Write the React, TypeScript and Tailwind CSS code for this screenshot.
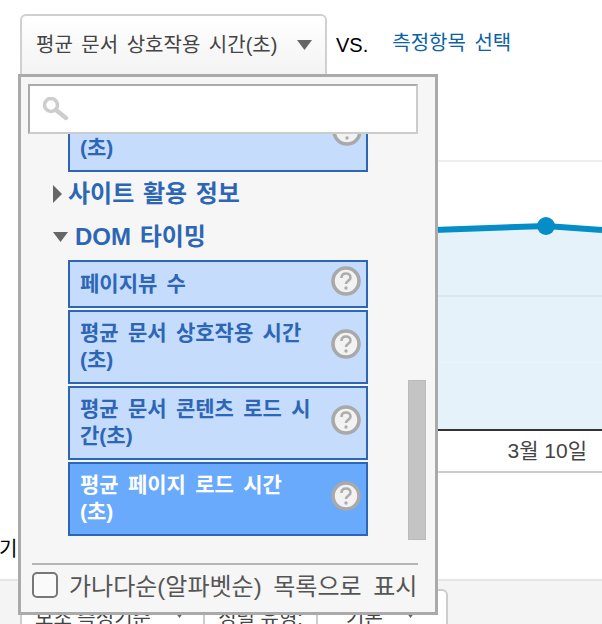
const font = "font-['Liberation_Sans','Noto_Sans_CJK_KR',sans-serif]";

const metrics = [
  { label: "페이지뷰 수", h: "h-[48px]" },
  { label: "평균 문서 상호작용 시간\n(초)", h: "h-[74px]" },
  { label: "평균 문서 콘텐츠 로드 시\n간(초)", h: "h-[74px]" },
  { label: "평균 페이지 로드 시간\n(초)", h: "h-[74px]", selected: true },
];

function HelpIcon() {
  return (
    <svg width="30" height="30" viewBox="0 0 30 30" className="shrink-0">
      <circle cx="15" cy="15" r="13" fill="#f2f2f2" stroke="#a9a9a9" strokeWidth="3.6" />
      <path
        d="M10.5 12c0-3 2-4.5 4.5-4.5s4.5 1.6 4.5 4c0 3.3-4.5 3.3-4.5 6.5"
        fill="none"
        stroke="#adadad"
        strokeWidth="2.6"
      />
      <circle cx="15" cy="22" r="1.7" fill="#adadad" />
    </svg>
  );
}

function Caret() {
  return (
    <svg width="15" height="10" viewBox="0 0 15 10" className="shrink-0">
      <path d="M0 0H15L7.5 10Z" fill="#666666" />
    </svg>
  );
}

function MetricItem({ label, h, selected }: { label: string; h: string; selected?: boolean }) {
  return (
    <div
      className={`flex w-[300px] items-center justify-between border-2 border-[#2d66b5] pl-[10px] pr-[5px] ${h} ${
        selected ? "bg-[#69aafd] text-white" : "bg-[#c5dcfd] text-[#2d66b5]"
      }`}
    >
      <span className="pb-[2px] text-[21px] leading-[27px] font-bold whitespace-pre-line [word-spacing:3.5px]">
        {label}
      </span>
      <div className="mb-[6px]">
        <HelpIcon />
      </div>
    </div>
  );
}

function MetricPanel() {
  return (
    <div className="absolute top-[74px] left-[18px] flex h-[541px] w-[420px] flex-col border-[3px] border-[#aaaaaa] bg-[#f6f6f6] px-[7px] pt-[7px]">
      <div className="flex h-[50px] w-[390px] shrink-0 items-center border-2 border-[#cccccc] border-t-[#aaaaaa] border-l-[#aaaaaa] bg-white pl-[12px]">
        <svg width="27" height="24" viewBox="0 0 27 24" className="blur-[0.5px]">
          <circle cx="9" cy="8" r="6.5" fill="none" stroke="#cdcdcd" strokeWidth="3.6" />
          <path d="M14 13 24 21" stroke="#cdcdcd" strokeWidth="4.4" strokeLinecap="round" />
        </svg>
      </div>
      <div className="relative h-[429px] shrink-0 overflow-hidden pl-[40px]">
        <div className="flex h-[38px] w-[300px] items-end border-2 border-t-0 border-[#2d66b5] bg-[#c5dcfd] pl-[10px] pb-[9px] text-[21px] leading-[27px] font-bold text-[#2d66b5]">
          <span>(초)</span>
        </div>
        <div className="absolute top-[-18px] left-[304px]">
          <HelpIcon />
        </div>
        <div className="relative mt-[2px] flex h-[40px] items-center text-[24px] font-bold text-[#2d66b5] [word-spacing:2px]">
          <svg width="9" height="18" viewBox="0 0 9 18" className="absolute left-[-15px]">
            <path d="M0 0 9 9 0 18Z" fill="#666666" />
          </svg>
          <span>사이트 활용 정보</span>
        </div>
        <div className="relative mt-[2px] flex h-[40px] items-center pt-[1px] pl-[7px] text-[24px] font-bold text-[#2d66b5] [word-spacing:2px]">
          <div className="absolute left-[-15px]">
            <Caret />
          </div>
          <span>DOM 타이밍</span>
        </div>
        <div className="mt-[4px] flex flex-col gap-[2px]">
          {metrics.map((m) => (
            <MetricItem key={m.label} {...m} />
          ))}
        </div>
        <div className="absolute top-[246px] left-[380px] h-[160px] w-[18px] border border-[#bbbbbb] bg-[#c4c4c4]" />
      </div>
      <div className="ml-[4px] flex h-[48px] w-[386px] shrink-0 items-center gap-[11px] border-t-2 border-[#b5b5b5] pb-[6px]">
        <div className="h-[26px] w-[26px] rounded-[5px] border-2 border-[#777777] bg-[#fafafa]" />
        <span className="mt-[3px] text-[24px] text-[#555555] [word-spacing:5px]">가나다순(알파벳순) 목록으로 표시</span>
      </div>
    </div>
  );
}

export default function App() {
  return (
    <div className={`relative h-[624px] w-[602px] overflow-hidden bg-white ${font}`}>
      <div className="flex h-[160px] items-start pt-[14px] pl-[20px]">
        <div className="flex h-[60px] w-[307px] items-center rounded-t-[6px] border-2 border-b-0 border-[#d0d0d0] bg-gradient-to-b from-white to-[#f3f3f3] pr-[13px] pl-[14px] text-[20px] text-[#444444] [word-spacing:3px]">
          <span>평균 문서 상호작용 시간(초)</span>
          <div className="ml-auto">
            <Caret />
          </div>
        </div>
        <span className="mt-[16px] ml-[9px] text-[20px] text-black">VS.</span>
        <span className="mt-[14px] ml-[24px] text-[20px] text-[#0b62a4] [word-spacing:3px]">측정항목 선택</span>
      </div>

      <svg width="602" height="271" viewBox="0 0 602 271" className="block">
        <line x1="20" y1="1" x2="602" y2="1" stroke="#eeeeee" strokeWidth="2" />
        <path d="M20 85 546 66 602 70V269H20Z" fill="#e5f2f9" />
        <line x1="20" y1="136" x2="602" y2="136" stroke="#d9e7ee" strokeWidth="2" />
        <line x1="20" y1="202" x2="602" y2="202" stroke="#eaf3f8" strokeWidth="2" />
        <path d="M20 85 546 66 602 70" fill="none" stroke="#058dc7" strokeWidth="6" />
        <circle cx="546" cy="66" r="9" fill="#058dc7" />
        <line x1="20" y1="270" x2="602" y2="270" stroke="#333333" strokeWidth="2" />
      </svg>

      <div className="ml-[20px] flex h-[42px] items-center justify-end border-b-2 border-[#cccccc] pr-[15px] text-[21px] text-[#444444]">
        3월 10일
      </div>

      <div className="flex h-[106px] items-end text-[20px] leading-[28px] text-black">
        <span className="mb-[16px] -ml-[1px]">기</span>
      </div>

      <div className="flex h-[47px] border-t-2 border-[#e5e5e5] bg-[#f4f4f4] pt-[8px] pl-[20px] text-[20px] text-[#444444]">
        <div className="flex h-[60px] w-[185px] items-start gap-[21px] rounded-t-[4px] border-2 border-[#cccccc] bg-white pt-[12px] pl-[13px]">
          보조 측정기준
          <div className="mt-[5px]">
            <Caret />
          </div>
        </div>
        <div className="flex h-[60px] w-[113px] justify-center border-y-2 border-r-2 border-[#cccccc] bg-white pt-[12px]">
          정렬 유형:
        </div>
        <div className="flex h-[60px] w-[130px] items-start gap-[20px] rounded-tr-[6px] border-y-2 border-r-2 border-[#cccccc] bg-white pt-[12px] pl-[28px]">
          기본
          <div className="mt-[5px]">
            <Caret />
          </div>
        </div>
      </div>

      <MetricPanel />
    </div>
  );
}
